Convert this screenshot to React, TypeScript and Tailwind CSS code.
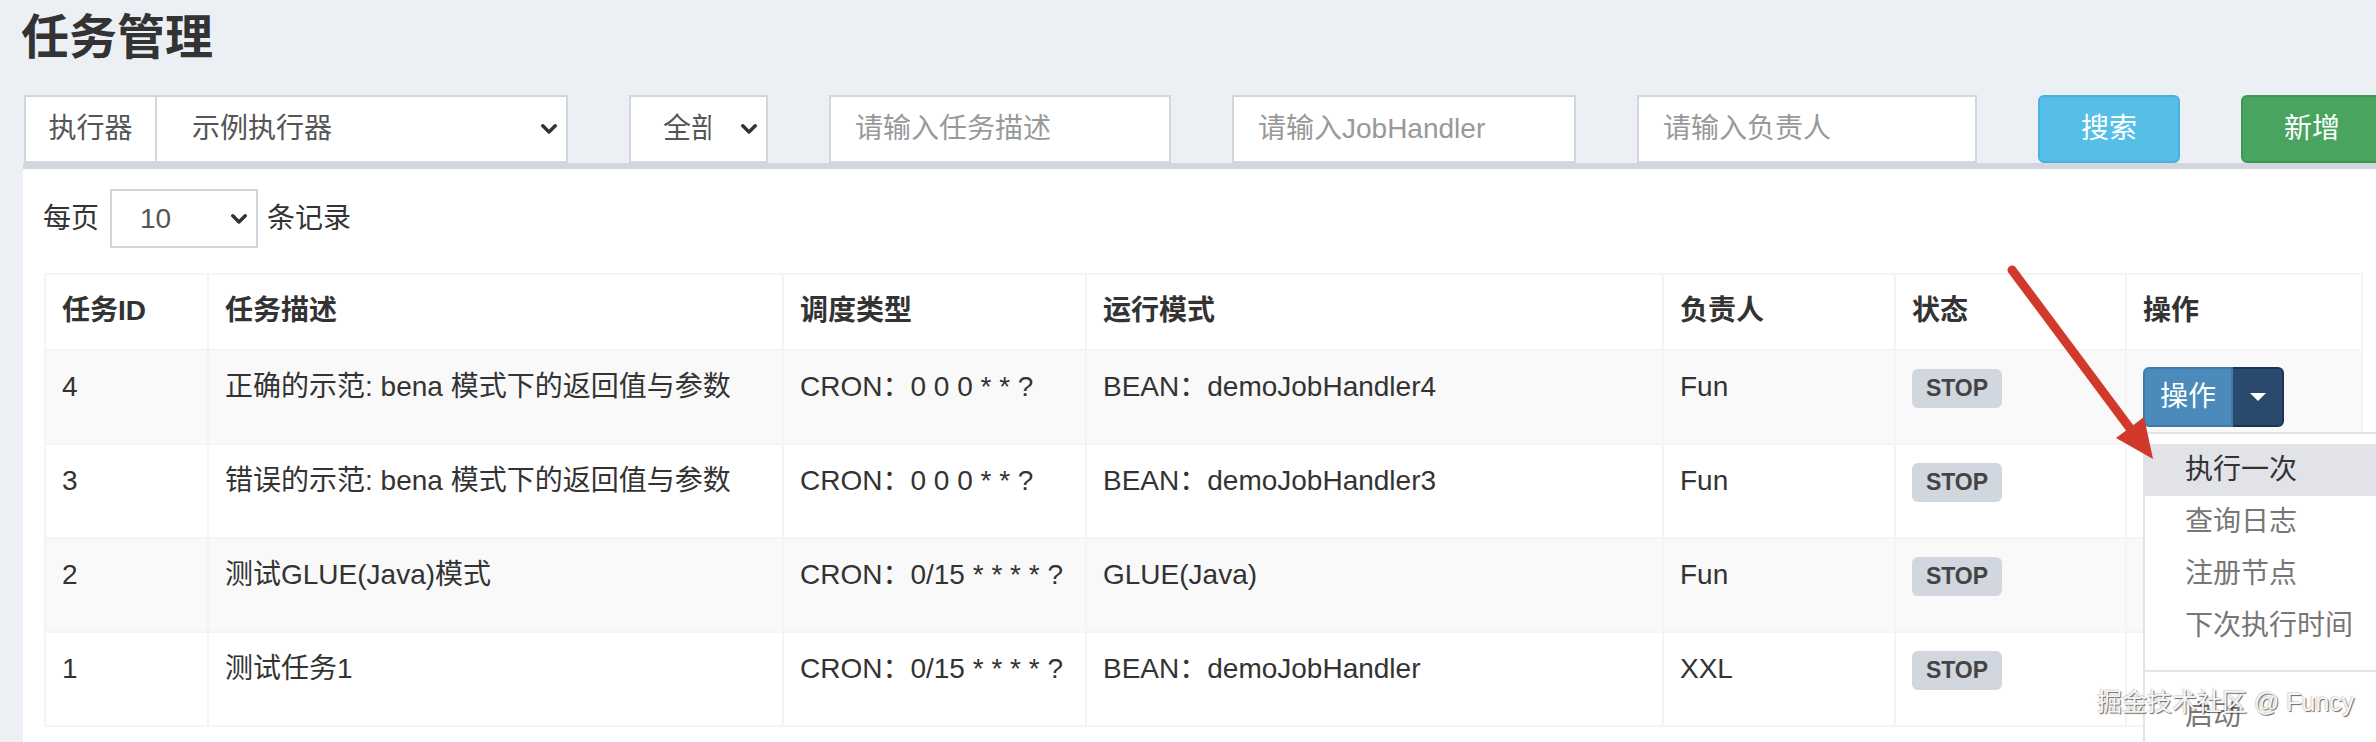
import React from "react";

const Chevron = () => (
  <svg width="16" height="10" viewBox="0 0 16 10" className="shrink-0">
    <path d="M1.8 1.8 L8 8 L14.2 1.8" fill="none" stroke="#333" strokeWidth="3.4" strokeLinecap="round" strokeLinejoin="round" />
  </svg>
);

const cols = ["任务ID", "任务描述", "调度类型", "运行模式", "负责人", "状态", "操作"];

const rows = [
  { id: "4", desc: "正确的示范: bena 模式下的返回值与参数", cron: "CRON：0 0 0 * * ?", mode: "BEAN：demoJobHandler4", owner: "Fun" },
  { id: "3", desc: "错误的示范: bena 模式下的返回值与参数", cron: "CRON：0 0 0 * * ?", mode: "BEAN：demoJobHandler3", owner: "Fun" },
  { id: "2", desc: "测试GLUE(Java)模式", cron: "CRON：0/15 * * * * ?", mode: "GLUE(Java)", owner: "Fun" },
  { id: "1", desc: "测试任务1", cron: "CRON：0/15 * * * * ?", mode: "BEAN：demoJobHandler", owner: "XXL" },
];

const menuItems = ["执行一次", "查询日志", "注册节点", "下次执行时间"];

function OpButton({ open }: { open: boolean }) {
  return (
    <div className="relative flex h-[60px] w-[141px]">
      <div className="flex h-[60px] w-[90px] items-center justify-center rounded-l-[6px] border-2 border-[#3f7aa8] bg-[#4a8bbb] text-[28px] text-white">
        操作
      </div>
      <div
        className={
          open
            ? "flex h-[60px] w-[51px] items-center justify-center rounded-r-[6px] border-2 border-l-0 border-[#1d3552] bg-[#29496d]"
            : "flex h-[60px] w-[51px] items-center justify-center rounded-r-[6px] border-2 border-l-0 border-[#3f7aa8] bg-[#4a8bbb]"
        }
      >
        <svg width="16" height="8" viewBox="0 0 16 8">
          <path d="M0 0 L16 0 L8 8 Z" fill="#fff" />
        </svg>
      </div>
      {open && (
        <div className="absolute left-0 top-[65px] z-10 w-[320px] border-2 border-[#e4e4e4] bg-white py-[10px]">
          {menuItems.map((m, i) => (
            <div
              key={m}
              className={
                i === 0
                  ? "h-[52px] bg-[#e1e3e9] pl-[40px] text-[28px] leading-[52px] text-[#333]"
                  : "h-[52px] pl-[40px] text-[28px] leading-[52px] text-[#777]"
              }
            >
              {m}
            </div>
          ))}
          <div className="my-[18px] h-[2px] bg-[#e5e5e5]" />
          <div className="h-[52px] pl-[40px] text-[28px] leading-[52px] text-[#777]">启动</div>
          <div className="h-[52px] pl-[40px] text-[28px] leading-[52px] text-[#777]">编辑</div>
        </div>
      )}
    </div>
  );
}

const cellBase =
  "border-b-2 border-r-2 border-[#f4f4f4] px-[16px] pt-[16px] text-[28px] leading-[40px] whitespace-nowrap";
const bodyCellOdd = cellBase + " h-[94px] bg-[#f9f9f9]";
const bodyCellEven = cellBase + " h-[94px] bg-white";
const headCell = cellBase + " h-[76px] font-bold";

export default function App() {
  return (
    <div className="relative h-[742px] w-[2376px] overflow-hidden bg-[#ecf0f5] font-['Liberation_Sans','Noto_Sans_CJK_SC',sans-serif] text-[#333]">
      {/* Title */}
      <div className="h-[95px] pl-[21px] pt-[14px]">
        <h1 className="text-[48px] font-bold leading-none text-[#333]">任务管理</h1>
      </div>

      {/* Toolbar */}
      <div className="flex h-[68px] gap-[61px] pl-[24px] text-[28px] text-[#555]">
        <div className="flex w-[544px] shrink-0">
          <div className="flex w-[133px] shrink-0 items-center justify-center border-2 border-[#d2d6de] bg-white">执行器</div>
          <div className="flex w-[411px] shrink-0 items-center justify-between border-2 border-l-0 border-[#d2d6de] bg-white pl-[35px] pr-[9px]">
            <span>示例执行器</span>
            <Chevron />
          </div>
        </div>
        <div className="flex w-[139px] shrink-0 items-center justify-between border-2 border-[#d2d6de] bg-white pl-[32px] pr-[9px]">
          <span className="w-[48px] overflow-hidden whitespace-nowrap">全部</span>
          <Chevron />
        </div>
        <input
          readOnly
          placeholder="请输入任务描述"
          className="h-[68px] w-[342px] shrink-0 border-2 border-[#d2d6de] bg-white px-[24px] text-[28px] outline-none placeholder:text-[#999]"
        />
        <input
          readOnly
          placeholder="请输入JobHandler"
          className="h-[68px] w-[344px] shrink-0 border-2 border-[#d2d6de] bg-white px-[24px] text-[28px] outline-none placeholder:text-[#999]"
        />
        <input
          readOnly
          placeholder="请输入负责人"
          className="h-[68px] w-[340px] shrink-0 border-2 border-[#d2d6de] bg-white px-[24px] text-[28px] outline-none placeholder:text-[#999]"
        />
        <button className="flex w-[142px] shrink-0 items-center justify-center rounded-[6px] border-2 border-[#47b2dc] bg-[#56bfe8] text-[28px] text-white">
          搜索
        </button>
        <button className="flex w-[142px] shrink-0 items-center justify-center rounded-[6px] border-2 border-[#3e9554] bg-[#48a45f] text-[28px] text-white">
          新增
        </button>
      </div>

      {/* Panel */}
      <div className="ml-[23px] h-[600px] border-t-[6px] border-[#d2d6de] bg-white pl-[20px] pt-[20px]">
        <div className="flex h-[59px] items-center text-[28px] text-[#333]">
          <span>每页</span>
          <div className="ml-[11px] flex h-[59px] w-[148px] items-center justify-between border-2 border-[#d2d6de] bg-white pl-[28px] pr-[9px] text-[#555]">
            <span>10</span>
            <Chevron />
          </div>
          <span className="ml-[9px]">条记录</span>
        </div>

        <div className="ml-[1px] mt-[25px] grid w-fit grid-cols-[163px_575px_303px_577px_232px_231px_236px] border-l-2 border-t-2 border-[#f4f4f4]">
          {cols.map((c) => (
            <div key={c} className={headCell}>
              {c}
            </div>
          ))}
          {rows.map((r, i) => {
            const cls = i % 2 === 0 ? bodyCellOdd : bodyCellEven;
            return (
              <React.Fragment key={r.id}>
                <div className={cls}>{r.id}</div>
                <div className={cls}>{r.desc}</div>
                <div className={cls}>{r.cron}</div>
                <div className={cls}>{r.mode}</div>
                <div className={cls}>{r.owner}</div>
                <div className={cls}>
                  <div className="mt-[2px] inline-flex h-[39px] w-[90px] items-center justify-center rounded-[6px] bg-[#d2d6de] text-[23px] font-bold leading-none text-[#444]">
                    STOP
                  </div>
                </div>
                <div className={cls}>
                  <OpButton open={i === 0} />
                </div>
              </React.Fragment>
            );
          })}
        </div>
      </div>

      {/* Red annotation arrow */}
      <svg className="pointer-events-none absolute left-0 top-0 z-20" width="2376" height="742" viewBox="0 0 2376 742">
        <line x1="2012" y1="270" x2="2132" y2="431" stroke="#d0392b" strokeWidth="9" strokeLinecap="round" />
        <polygon points="2116,438 2144,417 2153,459" fill="#d0392b" />
      </svg>

      {/* Watermark */}
      <div className="pointer-events-none absolute left-[2097px] top-[690px] z-30 whitespace-nowrap text-[25px] leading-none text-[#f6f6f6] [text-shadow:1px_1px_1px_rgba(0,0,0,0.6),-1px_-1px_1px_rgba(0,0,0,0.15)]">
        掘金技术社区 @ Funcy
      </div>
    </div>
  );
}
